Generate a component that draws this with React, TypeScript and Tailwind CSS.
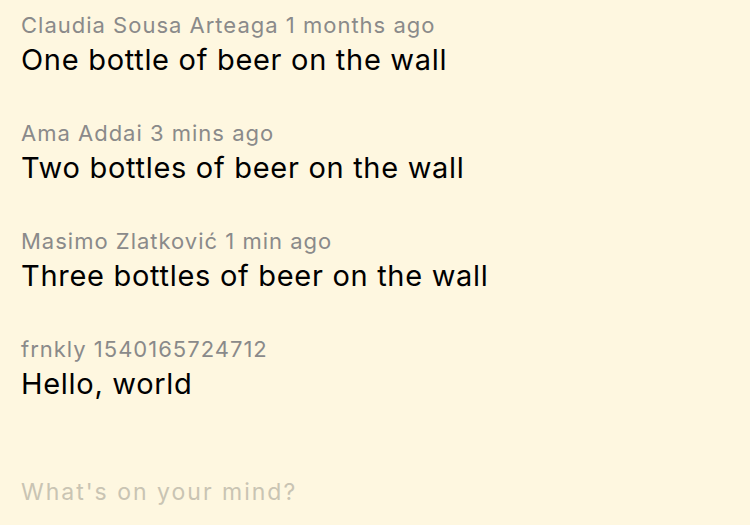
const posts = [
  { author: "Claudia Sousa Arteaga", time: "1 months ago", text: "One bottle of beer on the wall" },
  { author: "Ama Addai", time: "3 mins ago", text: "Two bottles of beer on the wall" },
  { author: "Masimo Zlatković", time: "1 min ago", text: "Three bottles of beer on the wall" },
  { author: "frnkly", time: "1540165724712", text: "Hello, world" },
];

const App = () => {
  return (
    <div
      className="min-h-screen bg-[#fef7e0] px-[21px] pt-[12px] flex flex-col"
      style={{ fontFamily: "Inter, 'Noto Sans', sans-serif" }}
    >
      <div className="flex flex-col gap-[38px]">
        {posts.map((post) => (
          <div key={post.text}>
            <p className="text-[22px] leading-[26px] tracking-[1px] text-[#8a8a8a]">
              {post.author} {post.time}
            </p>
            <p className="text-[29px] leading-[44px] tracking-[0.7px] text-black">{post.text}</p>
          </div>
        ))}
      </div>
      <input
        className="mt-[71px] h-[30px] bg-transparent text-[23px] tracking-[2px] text-black outline-none placeholder:text-[#c9c4b3]"
        placeholder="What's on your mind?"
      />
    </div>
  );
};

export default App;
